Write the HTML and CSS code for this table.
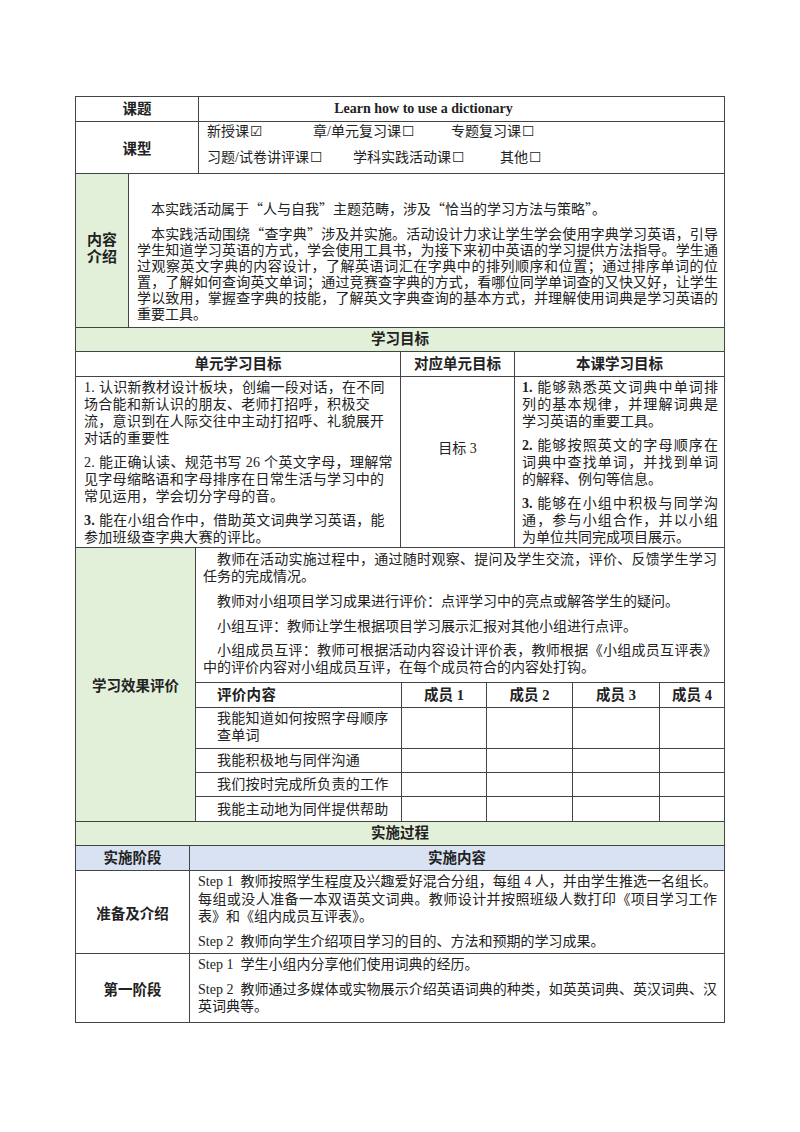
FILE: index.html
```html
<!DOCTYPE html>
<html lang="zh-CN">
<head>
<meta charset="utf-8">
<title>Learn how to use a dictionary</title>
<link rel="stylesheet" href="styles.css">
</head>
<body>
<div class="sheet">

  <div class="row r-title">
    <div class="c c-center lbl">课题</div>
    <div class="c c-center en-title">Learn how to use a dictionary</div>
  </div>

  <div class="row r-type">
    <div class="c c-center lbl">课型</div>
    <div class="c types">
      <div class="tline"><span class="tab-a">新授课<span class="box">☑</span></span><span class="tab-b">章/单元复习课<span class="box">☐</span></span><span>专题复习课<span class="box">☐</span></span></div>
      <div class="tline"><span class="tab-c">习题/试卷讲评课<span class="box">☐</span></span><span class="tab-d">学科实践活动课<span class="box">☐</span></span><span>其他<span class="box">☐</span></span></div>
    </div>
  </div>

  <div class="row r-intro">
    <div class="c c-center lbl green stack">内容<br>介绍</div>
    <div class="c intro">
      <p class="ind p-first">本实践活动属于<span class="q">“</span>人与自我<span class="q">”</span>主题范畴，涉及<span class="q">“</span>恰当的学习方法与策略<span class="q">”</span>。</p>
      <p><span class="jl ind">本实践活动围绕<span class="q">“</span>查字典<span class="q">”</span>涉及并实施。活动设计力求让学生学会使用字典学习英语，引导</span><span class="jl">学生知道学习英语的方式，学会使用工具书，为接下来初中英语的学习提供方法指导。学生通</span><span class="jl">过观察英文字典的内容设计，了解英语词汇在字典中的排列顺序和位置；通过排序单词的位</span><span class="jl">置，了解如何查询英文单词；通过竞赛查字典的方式，看哪位同学单词查的又快又好，让学生</span><span class="jl">学以致用，掌握查字典的技能，了解英文字典查询的基本方式，并理解使用词典是学习英语的</span><span class="ln">重要工具。</span></p>
    </div>
  </div>

  <div class="row r-band green"><div class="c c-center lbl">学习目标</div></div>

  <div class="row r-goalhead">
    <div class="c c-center lbl">单元学习目标</div>
    <div class="c c-center lbl">对应单元目标</div>
    <div class="c c-center lbl">本课学习目标</div>
  </div>

  <div class="row r-goals">
    <div class="c goals-left">
      <p>1. 认识新教材设计板块，创编一段对话，在不同<br>场合能和新认识的朋友、老师打招呼，积极交<br>流，意识到在人际交往中主动打招呼、礼貌展开<br>对话的重要性</p>
      <p>2. 能正确认读、规范书写 26 个英文字母，理解常<br>见字母缩略语和字母排序在日常生活与学习中的<br>常见运用，学会切分字母的音。</p>
      <p><b>3.</b> 能在小组合作中，借助英文词典学习英语，能<br>参加班级查字典大赛的评比。</p>
    </div>
    <div class="c c-center goals-mid">目标 3</div>
    <div class="c goals-right">
      <p><span class="jl"><b>1.</b> 能够熟悉英文词典中单词排</span><span class="jl">列的基本规律，并理解词典是</span><span class="ln">学习英语的重要工具。</span></p>
      <p><span class="jl"><b>2.</b> 能够按照英文的字母顺序在</span><span class="jl">词典中查找单词，并找到单词</span><span class="ln">的解释、例句等信息。</span></p>
      <p><span class="jl"><b>3.</b> 能够在小组中积极与同学沟</span><span class="jl">通，参与小组合作，并以小组</span><span class="ln">为单位共同完成项目展示。</span></p>
    </div>
  </div>

  <div class="row r-eval">
    <div class="c c-center lbl green">学习效果评价</div>
    <div class="c eval">
      <div class="evaltext">
        <p><span class="jl ind">教师在活动实施过程中，通过随时观察、提问及学生交流，评价、反馈学生学习</span><span class="ln">任务的完成情况。</span></p>
        <p class="ind">教师对小组项目学习成果进行评价：点评学习中的亮点或解答学生的疑问。</p>
        <p class="ind p-tight">小组互评：教师让学生根据项目学习展示汇报对其他小组进行点评。</p>
        <p><span class="jl ind">小组成员互评：教师可根据活动内容设计评价表，教师根据《小组成员互评表》</span><span class="ln">中的评价内容对小组成员互评，在每个成员符合的内容处打钩。</span></p>
      </div>
      <div class="mini">
        <div class="mrow m-head">
          <div class="m m-first lbl">评价内容</div>
          <div class="m m-mid lbl">成员 1</div>
          <div class="m m-mid lbl">成员 2</div>
          <div class="m m-mid lbl">成员 3</div>
          <div class="m m-mid lbl">成员 4</div>
        </div>
        <div class="mrow m-two">
          <div class="m m-first m-top">我能知道如何按照字母顺序<br>查单词</div>
          <div class="m"></div><div class="m"></div><div class="m"></div><div class="m"></div>
        </div>
        <div class="mrow m-one">
          <div class="m m-first">我能积极地与同伴沟通</div>
          <div class="m"></div><div class="m"></div><div class="m"></div><div class="m"></div>
        </div>
        <div class="mrow m-one">
          <div class="m m-first">我们按时完成所负责的工作</div>
          <div class="m"></div><div class="m"></div><div class="m"></div><div class="m"></div>
        </div>
        <div class="mrow m-one m-last">
          <div class="m m-first">我能主动地为同伴提供帮助</div>
          <div class="m"></div><div class="m"></div><div class="m"></div><div class="m"></div>
        </div>
      </div>
    </div>
  </div>

  <div class="row r-band green"><div class="c c-center lbl">实施过程</div></div>

  <div class="row r-stagehead blue">
    <div class="c c-center lbl">实施阶段</div>
    <div class="c c-center lbl">实施内容</div>
  </div>

  <div class="row r-prep">
    <div class="c c-center lbl">准备及介绍</div>
    <div class="c steps">
      <p><span class="jl">Step 1&nbsp; 教师按照学生程度及兴趣爱好混合分组，每组 4 人，并由学生推选一名组长。</span><span class="jl">每组或没人准备一本双语英文词典。教师设计并按照班级人数打印《项目学习工作</span><span class="ln">表》和《组内成员互评表》。</span></p>
      <p>Step 2&nbsp; 教师向学生介绍项目学习的目的、方法和预期的学习成果。</p>
    </div>
  </div>

  <div class="row r-first">
    <div class="c c-center lbl">第一阶段</div>
    <div class="c steps">
      <p>Step 1&nbsp; 学生小组内分享他们使用词典的经历。</p>
      <p><span class="jl">Step 2&nbsp; 教师通过多媒体或实物展示介绍英语词典的种类，如英英词典、英汉词典、汉</span><span class="ln">英词典等。</span></p>
    </div>
  </div>

</div>
</body>
</html>
```

FILE: styles.css
```css
* {
  box-sizing: border-box;
  margin: 0;
  padding: 0;
}

body {
  margin: 0;
  background: #ffffff;
  color: #222222;
  font-family: "Liberation Serif", "Noto Sans CJK SC", serif;
  font-size: 14px;
}

.sheet {
  margin: 96px 0 40px 75px;
  width: 650px;
  border: 1px solid #444444;
  border-bottom: none;
}

.row {
  display: grid;
  border-bottom: 1px solid #444444;
}

.row > .c {
  border-right: 1px solid #444444;
}

.row > .c:last-child {
  border-right: none;
}

.c-center {
  display: flex;
  align-items: center;
  justify-content: center;
  text-align: center;
}

.lbl {
  font-family: "Liberation Serif", "Noto Sans CJK SC", sans-serif;
  font-weight: 700;
  font-size: 14.5px;
}

.green {
  background: #e2efd9;
}

.blue {
  background: #d9e2f3;
}

.box {
  font-family: "DejaVu Sans", sans-serif;
  font-size: 14px;
  margin-left: 1px;
}

/* full-width CJK quotation marks */
.q {
  font-family: "Noto Sans CJK SC", sans-serif;
}

/* justified single visual lines */
.jl {
  display: block;
  white-space: nowrap;
  text-align: justify;
  text-align-last: justify;
}

.ln {
  display: block;
}

.ind {
  text-indent: 1em;
}

/* title row */
.r-title {
  grid-template-columns: 123px 1fr;
  height: 25px;
  line-height: 24px;
}

.en-title {
  font-weight: 700;
  font-size: 14px;
  padding-right: 76px;
}

/* lesson type row */
.r-type {
  grid-template-columns: 123px 1fr;
  height: 52px;
}

.types {
  display: flex;
  flex-direction: column;
  gap: 9px;
  padding: 1px 0 0 8px;
  line-height: 17px;
}

.tline {
  display: flex;
}

.tab-a { width: 106px; }
.tab-b { width: 138px; }
.tab-c { width: 146px; }
.tab-d { width: 147px; }

/* intro row */
.r-intro {
  grid-template-columns: 53px 1fr;
  height: 154px;
}

.stack {
  line-height: 17px;
  font-size: 15px;
  padding-bottom: 4px;
}

.intro {
  padding: 26px 6px 0 8px;
  line-height: 16px;
}

.p-first {
  margin-bottom: 7px;
}

/* band rows */
.r-band {
  grid-template-columns: 1fr;
  height: 24px;
  line-height: 23px;
}

/* goal rows */
.r-goalhead {
  grid-template-columns: 325px 114px 1fr;
  height: 25px;
  line-height: 24px;
}

.r-goals {
  grid-template-columns: 325px 114px 1fr;
  height: 171px;
  line-height: 17px;
}

.goals-left {
  padding: 2px 8px 0 8px;
  letter-spacing: 0.3px;
  white-space: nowrap;
}

.goals-left p + p,
.goals-right p + p {
  margin-top: 7px;
}

.goals-mid {
  padding-bottom: 28px;
}

.goals-right {
  padding: 2px 6px 0 7px;
}

/* evaluation row */
.r-eval {
  grid-template-columns: 120px 1fr;
  height: 274px;
}

.eval {
  display: flex;
  flex-direction: column;
}

.evaltext {
  height: 134px;
  padding: 3px 7px 0 7px;
  line-height: 17px;
}

.evaltext p + p {
  margin-top: 8px;
}

.evaltext p + p.p-tight + p {
  margin-top: 7px;
}

.mini {
  border-top: 1px solid #444444;
}

.mrow {
  display: grid;
  grid-template-columns: 206px 85px 86px 87px 1fr;
  border-bottom: 1px solid #444444;
  line-height: 17px;
}

.m-last {
  border-bottom: none;
}

.m {
  border-right: 1px solid #444444;
}

.m:last-child {
  border-right: none;
}

.m-head { height: 25px; }
.m-two { height: 41px; }
.m-one { height: 24px; }
.m-last { height: 24px; }

.m-first {
  padding-left: 21px;
  display: flex;
  align-items: center;
  letter-spacing: 0.3px;
}

.m-top {
  display: block;
  padding-top: 2px;
}

.m-mid {
  display: flex;
  align-items: center;
  justify-content: center;
}

/* implementation rows */
.r-stagehead {
  grid-template-columns: 114px 1fr;
  height: 25px;
  line-height: 24px;
}

.r-prep {
  grid-template-columns: 114px 1fr;
  height: 83px;
}

.r-first {
  grid-template-columns: 114px 1fr;
  height: 69px;
}

.steps {
  padding: 2px 7px 0 8px;
  line-height: 17.5px;
}

.steps p + p {
  margin-top: 7px;
}
```
